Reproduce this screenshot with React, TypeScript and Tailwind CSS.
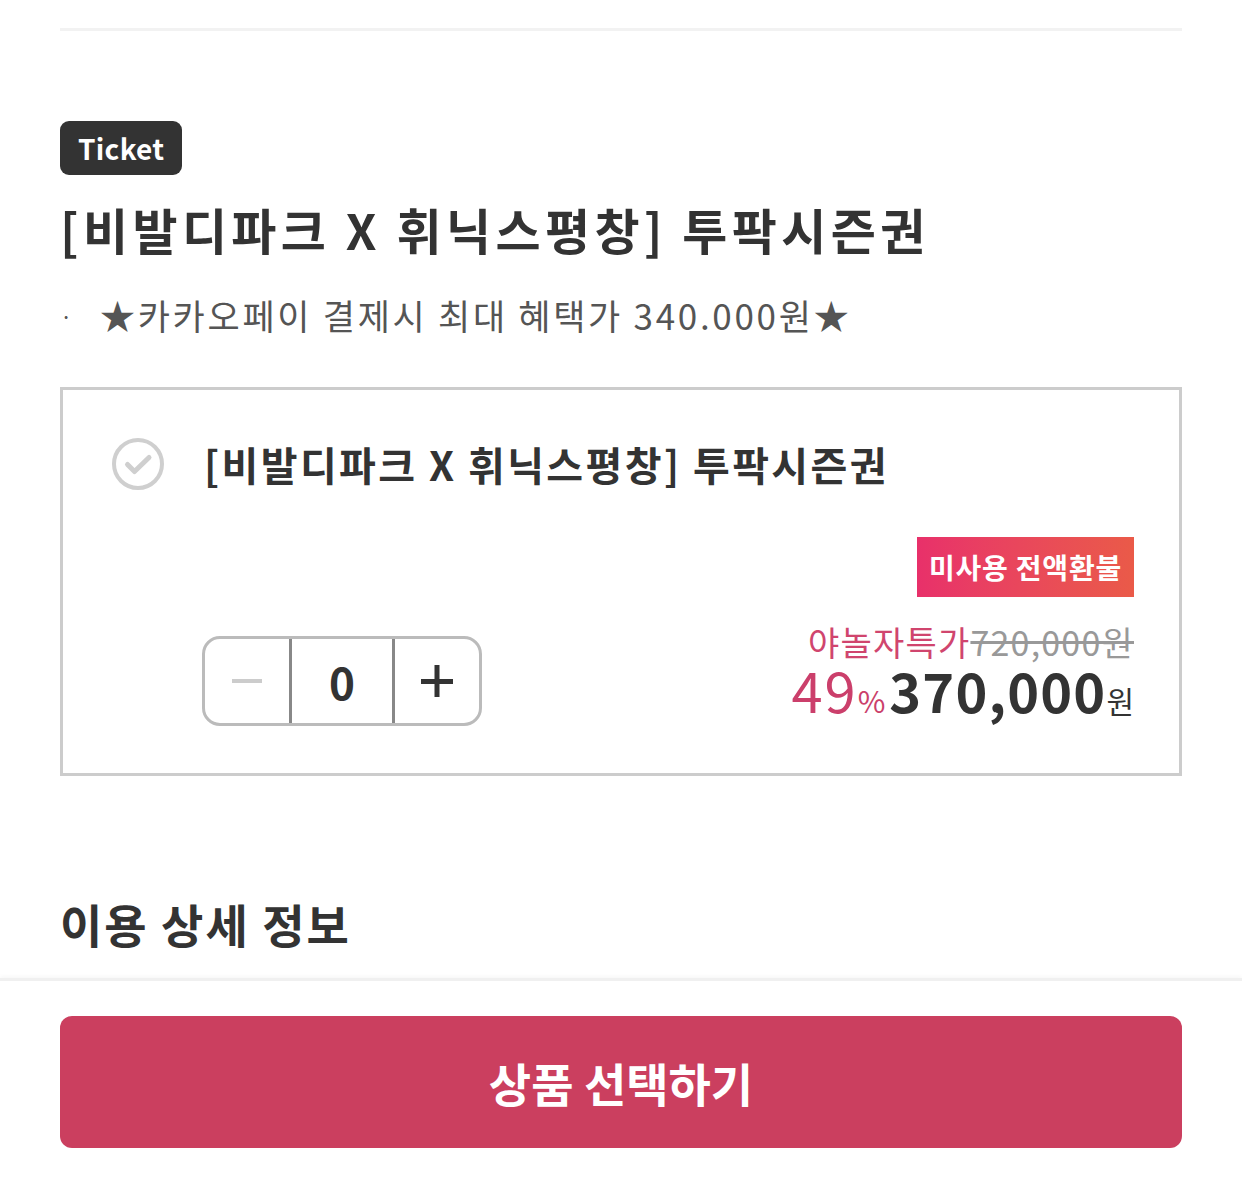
import { useState } from "react";

const App = () => {
  const [count, setCount] = useState(0);
  const font = { fontFamily: '"Noto Sans CJK KR", "Noto Sans", sans-serif' };

  return (
    <div className="min-h-screen bg-white text-[#333]" style={font}>
      <div className="px-[60px]">
        <div className="pt-[28px]">
          <div className="h-[3px] bg-[#f2f2f2]" />
        </div>

        {/* Header */}
        <div className="mt-[90px]">
          <span className="inline-flex items-center h-[54px] px-[18px] rounded-[9px] bg-[#333] text-white text-[28px] font-bold tracking-[0.3px]">
            Ticket
          </span>
        </div>
        <h1 className="mt-[18px] text-[49px] font-bold leading-[72px] tracking-[4.4px]">
          [비발디파크 X 휘닉스평창] 투팍시즌권
        </h1>
        <div className="mt-[25px] flex items-center text-[35px] leading-[50px] text-[#555]">
          <span className="w-[40px] text-[22px]">·</span>
          <span className="tracking-[2.7px]">★카카오페이 결제시 최대 혜택가 340.000원★</span>
        </div>

        {/* Option box */}
        <div className="mt-[47px] border-[3px] border-[#ccc] pl-[48px] pr-[45px] pt-[44px] pb-[47px]">
          <div className="flex items-center gap-[39px]">
            <svg width="54" height="54" viewBox="0 0 54 54" fill="none">
              <circle cx="27" cy="27" r="24" stroke="#cfcfcf" strokeWidth="4" />
              <path d="M16.5 27.5l7 7L38 20.5" stroke="#cfcfcf" strokeWidth="5" strokeLinecap="round" strokeLinejoin="round" />
            </svg>
            <div className="text-[40px] font-bold leading-[60px] tracking-[2.4px]">
              [비발디파크 X 휘닉스평창] 투팍시즌권
            </div>
          </div>

          <div className="flex justify-end mt-[43px]">
            <span className="inline-flex items-center h-[60px] px-[12px] bg-gradient-to-r from-[#e8306a] to-[#ea5a48] text-white text-[28px] font-bold tracking-[0.8px]">
              미사용 전액환불
            </span>
          </div>

          <div className="flex items-end justify-between pl-[91px]">
            <div className="flex h-[90px] w-[280px] border-[3px] border-[#bbb] rounded-[18px] overflow-hidden">
              <button
                className="w-[84px] flex items-center justify-center"
                onClick={() => setCount(Math.max(0, count - 1))}
              >
                <span className="block w-[30px] h-[4px] bg-[#ccc]" />
              </button>
              <div className="w-[106px] border-x-[3px] border-[#888] flex items-center justify-center text-[44px] font-bold">
                {count}
              </div>
              <button
                className="flex-1 flex items-center justify-center"
                onClick={() => setCount(count + 1)}
              >
                <svg width="32" height="32" viewBox="0 0 32 32">
                  <rect x="0" y="14" width="32" height="5" fill="#333" />
                  <rect x="13.5" y="0" width="5" height="32" fill="#333" />
                </svg>
              </button>
            </div>

            <div className="flex flex-col items-end pb-[3px]">
              <div className="text-[34px] leading-[49px] mt-[20px] tracking-[1.2px]">
                <span className="text-[#d0456e]">야놀자특가</span>
                <span className="text-[#999] line-through">720,000원</span>
              </div>
              <div className="flex items-baseline leading-[46px]">
                <span className="text-[56px] text-[#cb3f6b] tracking-[2px]">49</span>
                <span className="text-[30px] text-[#cb3f6b] mr-[4px]">%</span>
                <span className="text-[54px] font-bold tracking-[1.2px]">370,000</span>
                <span className="text-[30px]">원</span>
              </div>
            </div>
          </div>
        </div>

        <h2 className="mt-[117px] text-[46px] font-bold leading-[60px] tracking-[2px]">
          이용 상세 정보
        </h2>
      </div>

      {/* Bottom bar */}
      <div className="mt-[25px] border-t-[3px] border-[#f0f0f0] px-[60px] pt-[35px] pb-[36px] shadow-[0_-2px_4px_rgba(0,0,0,0.03)]">
        <button className="w-full h-[132px] rounded-[12px] bg-[#cb3f5f] text-white text-[46px] font-bold">
          상품 선택하기
        </button>
      </div>
    </div>
  );
};

export default App;
